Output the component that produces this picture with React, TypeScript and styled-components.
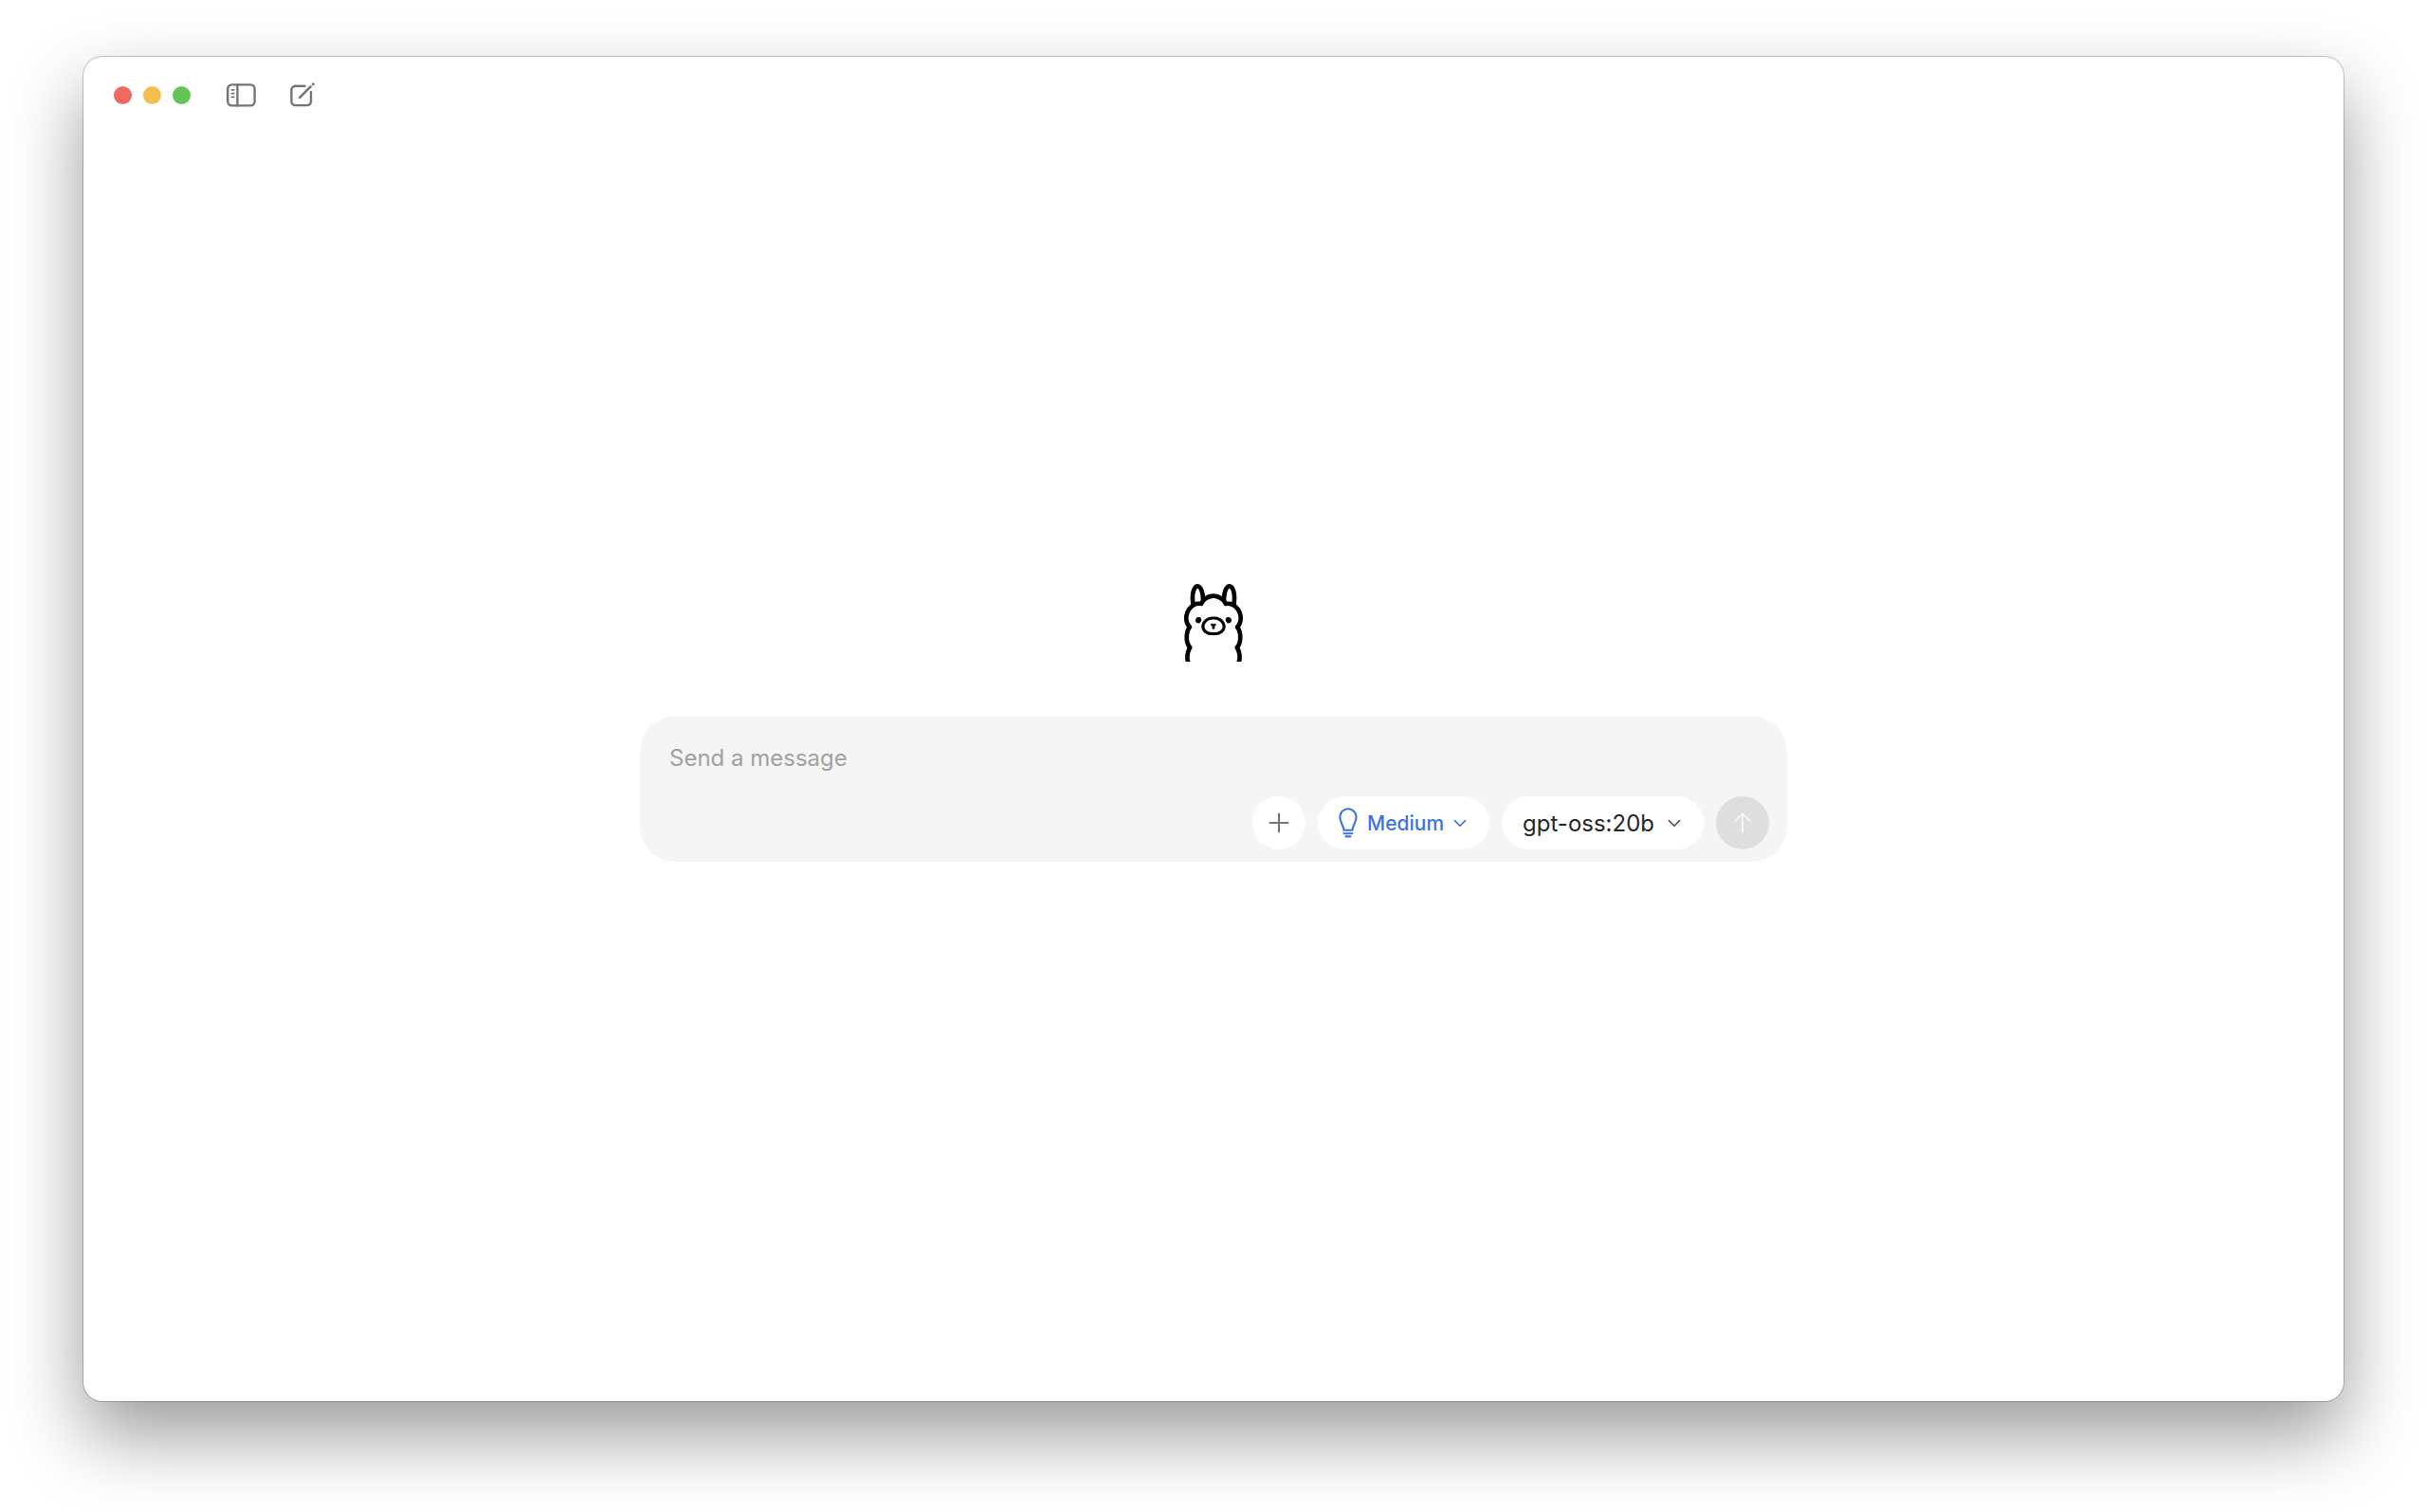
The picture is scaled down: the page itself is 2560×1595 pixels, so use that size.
import React, { useState } from "react";
import styled, { createGlobalStyle } from "styled-components";
import { SiOllama } from "react-icons/si";

const GlobalStyle = createGlobalStyle`
  *, *::before, *::after {
    box-sizing: border-box;
  }
  body {
    margin: 0;
    background: #ffffff;
    font-family: Inter, "Liberation Sans", sans-serif;
  }
  button, select, textarea {
    margin: 0;
    padding: 0;
    border: none;
    background: none;
    font-family: inherit;
    outline: none;
  }
`;

const Desktop = styled.div`
  display: flex;
  min-height: 100vh;
  padding: 60px 88px 117px;
  overflow: hidden;
`;

const AppWindow = styled.div`
  flex: 1;
  display: flex;
  flex-direction: column;
  background: #ffffff;
  border-radius: 20px;
  box-shadow: 0 0 0 1px rgba(0, 0, 0, 0.22), 0 36px 80px rgba(0, 0, 0, 0.4);
`;

const TitleBar = styled.header`
  display: flex;
  align-items: center;
  height: 81px;
  padding: 0 32px;
`;

const TrafficLights = styled.div`
  display: flex;
  gap: 12px;
  margin-right: 38px;
`;

const Light = styled.button<{ $color: string }>`
  width: 19px;
  height: 19px;
  border-radius: 50%;
  background: ${({ $color }) => $color};
`;

const Tools = styled.div`
  display: flex;
  align-items: center;
  gap: 34px;
`;

const ToolButton = styled.button`
  display: flex;
  color: #747474;
`;

const Main = styled.main`
  flex: 1;
  display: flex;
  flex-direction: column;
  align-items: center;
  justify-content: center;
  gap: 58px;
  padding: 0 32px 94px;
`;

const Logo = styled(SiOllama)`
  width: 82px;
  height: 82px;
  color: #000000;
`;

const Composer = styled.form`
  display: flex;
  flex-direction: column;
  gap: 20px;
  width: 100%;
  max-width: 1210px;
  padding: 28px 19px 13px 31px;
  background: #f5f5f5;
  border-radius: 36px;
`;

const MessageInput = styled.textarea`
  width: 100%;
  height: 36px;
  line-height: 32px;
  font-size: 24px;
  color: #262626;
  resize: none;
  &::placeholder {
    color: #a1a1a1;
    opacity: 1;
  }
`;

const Actions = styled.div`
  display: flex;
  justify-content: flex-end;
  gap: 13px;
`;

const RoundButton = styled.button<{ $background: string; $color: string }>`
  display: flex;
  align-items: center;
  justify-content: center;
  width: 56px;
  height: 56px;
  border-radius: 50%;
  background: ${({ $background }) => $background};
  color: ${({ $color }) => $color};
`;

const Pill = styled.label<{ $color: string; $gap: number }>`
  display: flex;
  align-items: center;
  gap: ${({ $gap }) => $gap}px;
  height: 56px;
  padding: 0 24px 0 22px;
  border-radius: 28px;
  background: #ffffff;
  color: ${({ $color }) => $color};
`;

const PillSelect = styled.select<{ $size: number; $weight: number }>`
  appearance: none;
  field-sizing: content;
  height: 32px;
  font-size: ${({ $size }) => $size}px;
  font-weight: ${({ $weight }) => $weight};
  color: inherit;
`;

const SidebarIcon = () => (
  <svg width="32" height="25" viewBox="0 0 32 25" fill="none" stroke="currentColor" strokeWidth="2.4" strokeLinecap="round">
    <rect x="1.2" y="1.4" width="28.4" height="22" rx="4.4" />
    <path d="M11.4 1.4v22" />
    <path d="M5.4 6.8h2.4M5.4 10.6h2.4M5.4 14.4h2.4" strokeWidth="1.7" />
  </svg>
);

const ComposeIcon = () => (
  <svg width="27" height="27" viewBox="0 0 27 27" fill="none" stroke="currentColor" strokeWidth="2.4" strokeLinecap="round">
    <path d="M16.6 3.8H6.6A4.2 4.2 0 0 0 2.4 8v11.9a4.2 4.2 0 0 0 4.2 4.2h12.2a4.2 4.2 0 0 0 4.2-4.2V10" />
    <path d="M11.2 15.8 22.6 4.4" strokeWidth="2.6" />
    <path d="M25.2 1.9l.2-.2" strokeWidth="2.8" />
  </svg>
);

const PlusIcon = () => (
  <svg width="22" height="22" viewBox="0 0 22 22" fill="none" stroke="currentColor" strokeWidth="2" strokeLinecap="round">
    <path d="M11 1.6v18.8M1.6 11h18.8" />
  </svg>
);

const BulbIcon = () => (
  <svg width="20" height="32" viewBox="0 0 20 32" fill="none" stroke="currentColor" strokeWidth="2.1" strokeLinecap="round" strokeLinejoin="round">
    <path d="M5.6 23.8C5 18.2 1.4 15.4 1.4 9.8a8.6 8.6 0 0 1 17.2 0c0 5.6-3.6 8.4-4.2 14z" />
    <path d="M5.6 27.2h8.8M7.6 30.4h4.8" />
  </svg>
);

const ChevronIcon = ({ color = "currentColor" }: { color?: string }) => (
  <svg width="14" height="9" viewBox="0 0 14 9" fill="none" stroke={color} strokeWidth="1.6" strokeLinecap="round" strokeLinejoin="round">
    <path d="M1.4 1.6 7 7.2l5.6-5.6" />
  </svg>
);

const ArrowUpIcon = () => (
  <svg width="20" height="24" viewBox="0 0 20 24" fill="none" stroke="currentColor" strokeWidth="2" strokeLinecap="round" strokeLinejoin="round">
    <path d="M10 22V2.4M2 10.2l8-7.8 8 7.8" />
  </svg>
);

export default function App() {
  const [message, setMessage] = useState("");

  return (
    <>
      <GlobalStyle />
      <Desktop>
        <AppWindow>
          <TitleBar>
            <TrafficLights>
              <Light $color="#ec6a5f" aria-label="Close" />
              <Light $color="#f4bf50" aria-label="Minimize" />
              <Light $color="#62c654" aria-label="Zoom" />
            </TrafficLights>
            <Tools>
              <ToolButton aria-label="Toggle sidebar">
                <SidebarIcon />
              </ToolButton>
              <ToolButton aria-label="New chat">
                <ComposeIcon />
              </ToolButton>
            </Tools>
          </TitleBar>
          <Main>
            <Logo aria-hidden="true" />
            <Composer onSubmit={(event) => event.preventDefault()}>
              <MessageInput
                aria-label="Message"
                placeholder="Send a message"
                rows={1}
                value={message}
                onChange={(event) => setMessage(event.target.value)}
              />
              <Actions>
                <RoundButton type="button" $background="#ffffff" $color="#737373" aria-label="Add attachment">
                  <PlusIcon />
                </RoundButton>
                <Pill $color="#3b73dc" $gap={10}>
                  <BulbIcon />
                  <PillSelect $size={21} $weight={500} aria-label="Thinking level" defaultValue="Medium">
                    <option>Medium</option>
                  </PillSelect>
                  <ChevronIcon />
                </Pill>
                <Pill $color="#262626" $gap={14}>
                  <PillSelect $size={24} $weight={400} aria-label="Model" defaultValue="gpt-oss:20b">
                    <option>gpt-oss:20b</option>
                  </PillSelect>
                  <ChevronIcon color="#525252" />
                </Pill>
                <RoundButton type="submit" $background="#dedede" $color="#f4f4f4" aria-label="Send">
                  <ArrowUpIcon />
                </RoundButton>
              </Actions>
            </Composer>
          </Main>
        </AppWindow>
      </Desktop>
    </>
  );
}
